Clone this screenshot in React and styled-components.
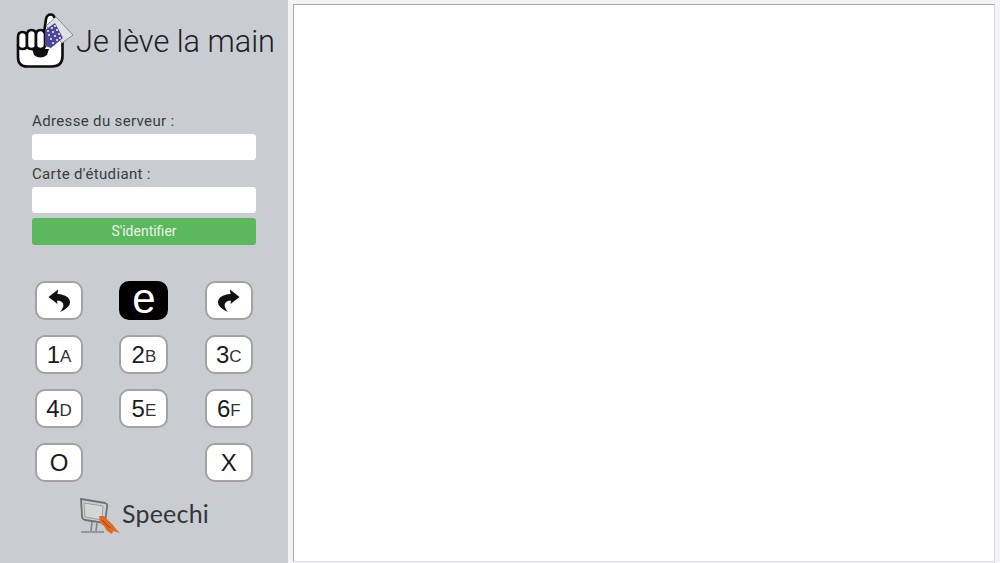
import styled, { createGlobalStyle } from "styled-components";

const GlobalStyle = createGlobalStyle`
  html, body {
    margin: 0;
    height: 100%;
    background: #f4f3f6;
    font-family: "Roboto", "Liberation Sans", sans-serif;
  }
`;

const Page = styled.div`
  width: 1000px;
  height: 563px;
  display: flex;
  overflow: hidden;
`;

const Sidebar = styled.aside`
  width: 288px;
  flex: none;
  background: #c9cdd2;
  display: flex;
  flex-direction: column;
  box-sizing: border-box;
  padding-top: 13px;
`;

const Logo = styled.div`
  display: flex;
  align-items: center;
  height: 55px;
  padding-left: 16px;
  gap: 2px;
`;

const LogoText = styled.span`
  font-family: "Roboto", "Liberation Sans", sans-serif;
  font-weight: 300;
  font-size: 30.7px;
  color: #1d2023;
  white-space: nowrap;
  margin-top: 1px;
`;

const Form = styled.form`
  width: 225px;
  margin: 44px 0 0 32px;
  display: flex;
  flex-direction: column;
`;

const Label = styled.label`
  font-size: 15px;
  line-height: 17px;
  letter-spacing: 0.35px;
  color: #3a3d40;
  height: 17px;
  margin-top: 1px;
  margin-bottom: 4px;
`;

const Input = styled.input`
  height: 26px;
  box-sizing: border-box;
  border: 0;
  border-radius: 3px;
  background: #fff;
  margin-right: 1px;
  padding: 0;
  outline: none;
  margin-bottom: ${(p) => p.$gap}px;
`;

const Submit = styled.button`
  height: 27px;
  border: 0;
  border-radius: 3px;
  background: #5cb85c;
  color: #e9f6e9;
  font-family: inherit;
  font-size: 14px;
  padding: 0 0 2px;
  margin-right: 1px;
`;

const Keypad = styled.div`
  margin: 36px 0 0 35px;
  width: 217.8px;
  display: grid;
  grid-template-columns: 48px 49px 48px;
  justify-content: space-between;
  grid-auto-rows: 39px;
  row-gap: 15px;
`;

const Key = styled.button`
  box-sizing: border-box;
  padding: 0;
  border-radius: 10px;
  border: ${(p) => (p.$dark ? "0" : "2.5px solid #a2a2a2")};
  background: ${(p) => (p.$dark ? "#000" : "#fff")};
  color: ${(p) => (p.$dark ? "#fff" : "#1c1c1c")};
  font-family: "Liberation Sans", sans-serif;
  font-size: ${(p) => (p.$dark ? 42 : 24)}px;
  line-height: 1;
  display: flex;
  align-items: center;
  justify-content: center;
  padding-bottom: ${(p) => (p.$dark ? 3 : 0)}px;
  grid-column: ${(p) => p.$col || "auto"};
`;

const Letter = styled.span`
  font-size: 17px;
  color: #333;
  margin-top: 3px;
`;

const Brand = styled.div`
  margin: 15px 0 0 79px;
  display: flex;
  align-items: flex-start;
  gap: 2px;
`;

const BrandName = styled.span`
  font-family: "Lato", sans-serif;
  font-size: 25px;
  color: #33363b;
  letter-spacing: 0.2px;
  margin-top: 1px;
`;

const Viewer = styled.main`
  box-sizing: border-box;
  width: 702px;
  height: 558px;
  margin: 4px 0 0 5px;
  background: #fff;
  border: 1px solid #a9a9ac;
  border-right-color: #dcdbe0;
  border-bottom-color: #dcdbe0;
  flex: none;
`;

const HandIcon = () => (
  <svg width="58" height="55" viewBox="0 0 58 55">
    <path
      d="M2 33 V44 Q2 53.5 11 53.5 H36 Q46.5 53.5 46.5 43 V26 L28 18 L28 33 Z"
      fill="#fff"
      stroke="#0c0c0c"
      strokeWidth="2.6"
    />
    <path d="M16 36 H33 L31 42 Q24 47 18 42 Z" fill="#111" />
    <path
      d="M2 24 Q2 19 6.5 19 Q11 19 11 24 V32 Q11 36 6.5 36 Q2 36 2 32 Z"
      fill="#fff"
      stroke="#0c0c0c"
      strokeWidth="2.6"
    />
    <path
      d="M11 22 Q11 17 15.5 17 Q20 17 20 22 V32 Q20 36 15.5 36 Q11 36 11 32 Z"
      fill="#fff"
      stroke="#0c0c0c"
      strokeWidth="2.6"
    />
    <path
      d="M20 22 Q20 17 24.5 17 Q29 17 29 22 V32 Q29 36 24.5 36 Q20 36 20 32 Z"
      fill="#fff"
      stroke="#0c0c0c"
      strokeWidth="2.6"
    />
    <path
      d="M28 20 L30 6 Q31 1.5 34.5 1.5 Q38 1.5 38.5 5"
      fill="#fff"
      stroke="#0c0c0c"
      strokeWidth="2.6"
      strokeLinejoin="round"
    />
    <path d="M40 4 L57 22 L46 30 L30 13 Z" fill="#dfe1e5" stroke="#8a8c90" strokeWidth="1" />
    <path d="M29 17 L39 10 L47 25 L35 35 L29 33 Z" fill="#4d4795" />
    <g fill="#e6e4f4">
      <circle cx="32" cy="18" r="1.1" />
      <circle cx="36" cy="15" r="1.1" />
      <circle cx="39" cy="13" r="1.1" />
      <circle cx="33" cy="22" r="1.1" />
      <circle cx="37" cy="19" r="1.1" />
      <circle cx="41" cy="17" r="1.1" />
      <circle cx="35" cy="26" r="1.1" />
      <circle cx="39" cy="23" r="1.1" />
      <circle cx="43" cy="21" r="1.1" />
      <circle cx="37" cy="30" r="1.1" />
      <circle cx="41" cy="27" r="1.1" />
      <circle cx="44" cy="25" r="1.1" />
    </g>
  </svg>
);

const UndoIcon = ({ flip }) => (
  <svg
    width="23"
    height="23"
    viewBox="0 0 23 23"
    style={flip ? { transform: "scaleX(-1)" } : undefined}
  >
    <path
      d="M0.5 8 L10 0.5 L9.5 5 Q22 6 22 13.5 Q22 18.5 12 23 Q16.5 18 15 14.5 Q13.5 11.5 9 11.5 L9.5 15 Z"
      fill="#111"
    />
  </svg>
);

const SpeechiIcon = () => (
  <svg width="41" height="37" viewBox="0 0 41 37">
    <path
      d="M2 2 L26 6 Q29 7 28 10 L26 26 L6 23 Q3 22 3 19 Z"
      fill="#cdd0d3"
      stroke="#6f7173"
      strokeWidth="1.8"
    />
    <path d="M5 6 L24 9 L23 23 L6 20 Z" fill="#d4d6d8" stroke="#9a9c9e" strokeWidth="1" />
    <path d="M13 25 L12 34 M18 26 L17 34 M2 35 L25 35" stroke="#85878a" strokeWidth="1.7" fill="none" />
    <path
      d="M20 19 L25 19 L30 24 L34 28 L37 32 L41 36 L34 34 L33 37 L28 34 L25 29 L21 26 Z"
      fill="#e06a24"
    />
    <path d="M23 23 L31 31" stroke="#8a4119" strokeWidth="1" />
  </svg>
);

const keys = [
  [<UndoIcon key="u" />],
  ["e", true],
  [<UndoIcon key="r" flip />],
  [<>1<Letter>A</Letter></>],
  [<>2<Letter>B</Letter></>],
  [<>3<Letter>C</Letter></>],
  [<>4<Letter>D</Letter></>],
  [<>5<Letter>E</Letter></>],
  [<>6<Letter>F</Letter></>],
];

const App = () => (
  <Page>
    <GlobalStyle />
    <Sidebar>
      <Logo>
        <HandIcon />
        <LogoText>Je lève la main</LogoText>
      </Logo>
      <Form onSubmit={(e) => e.preventDefault()}>
        <Label>Adresse du serveur :</Label>
        <Input $gap={5} />
        <Label>Carte d'étudiant :</Label>
        <Input $gap={5} />
        <Submit type="submit">S'identifier</Submit>
      </Form>
      <Keypad>
        {keys.map(([content, dark], i) => (
          <Key key={i} $dark={dark}>
            {content}
          </Key>
        ))}
        <Key $col="1">O</Key>
        <Key $col="3">X</Key>
      </Keypad>
      <Brand>
        <SpeechiIcon />
        <BrandName>Speechi</BrandName>
      </Brand>
    </Sidebar>
    <Viewer />
  </Page>
);

export default App;
